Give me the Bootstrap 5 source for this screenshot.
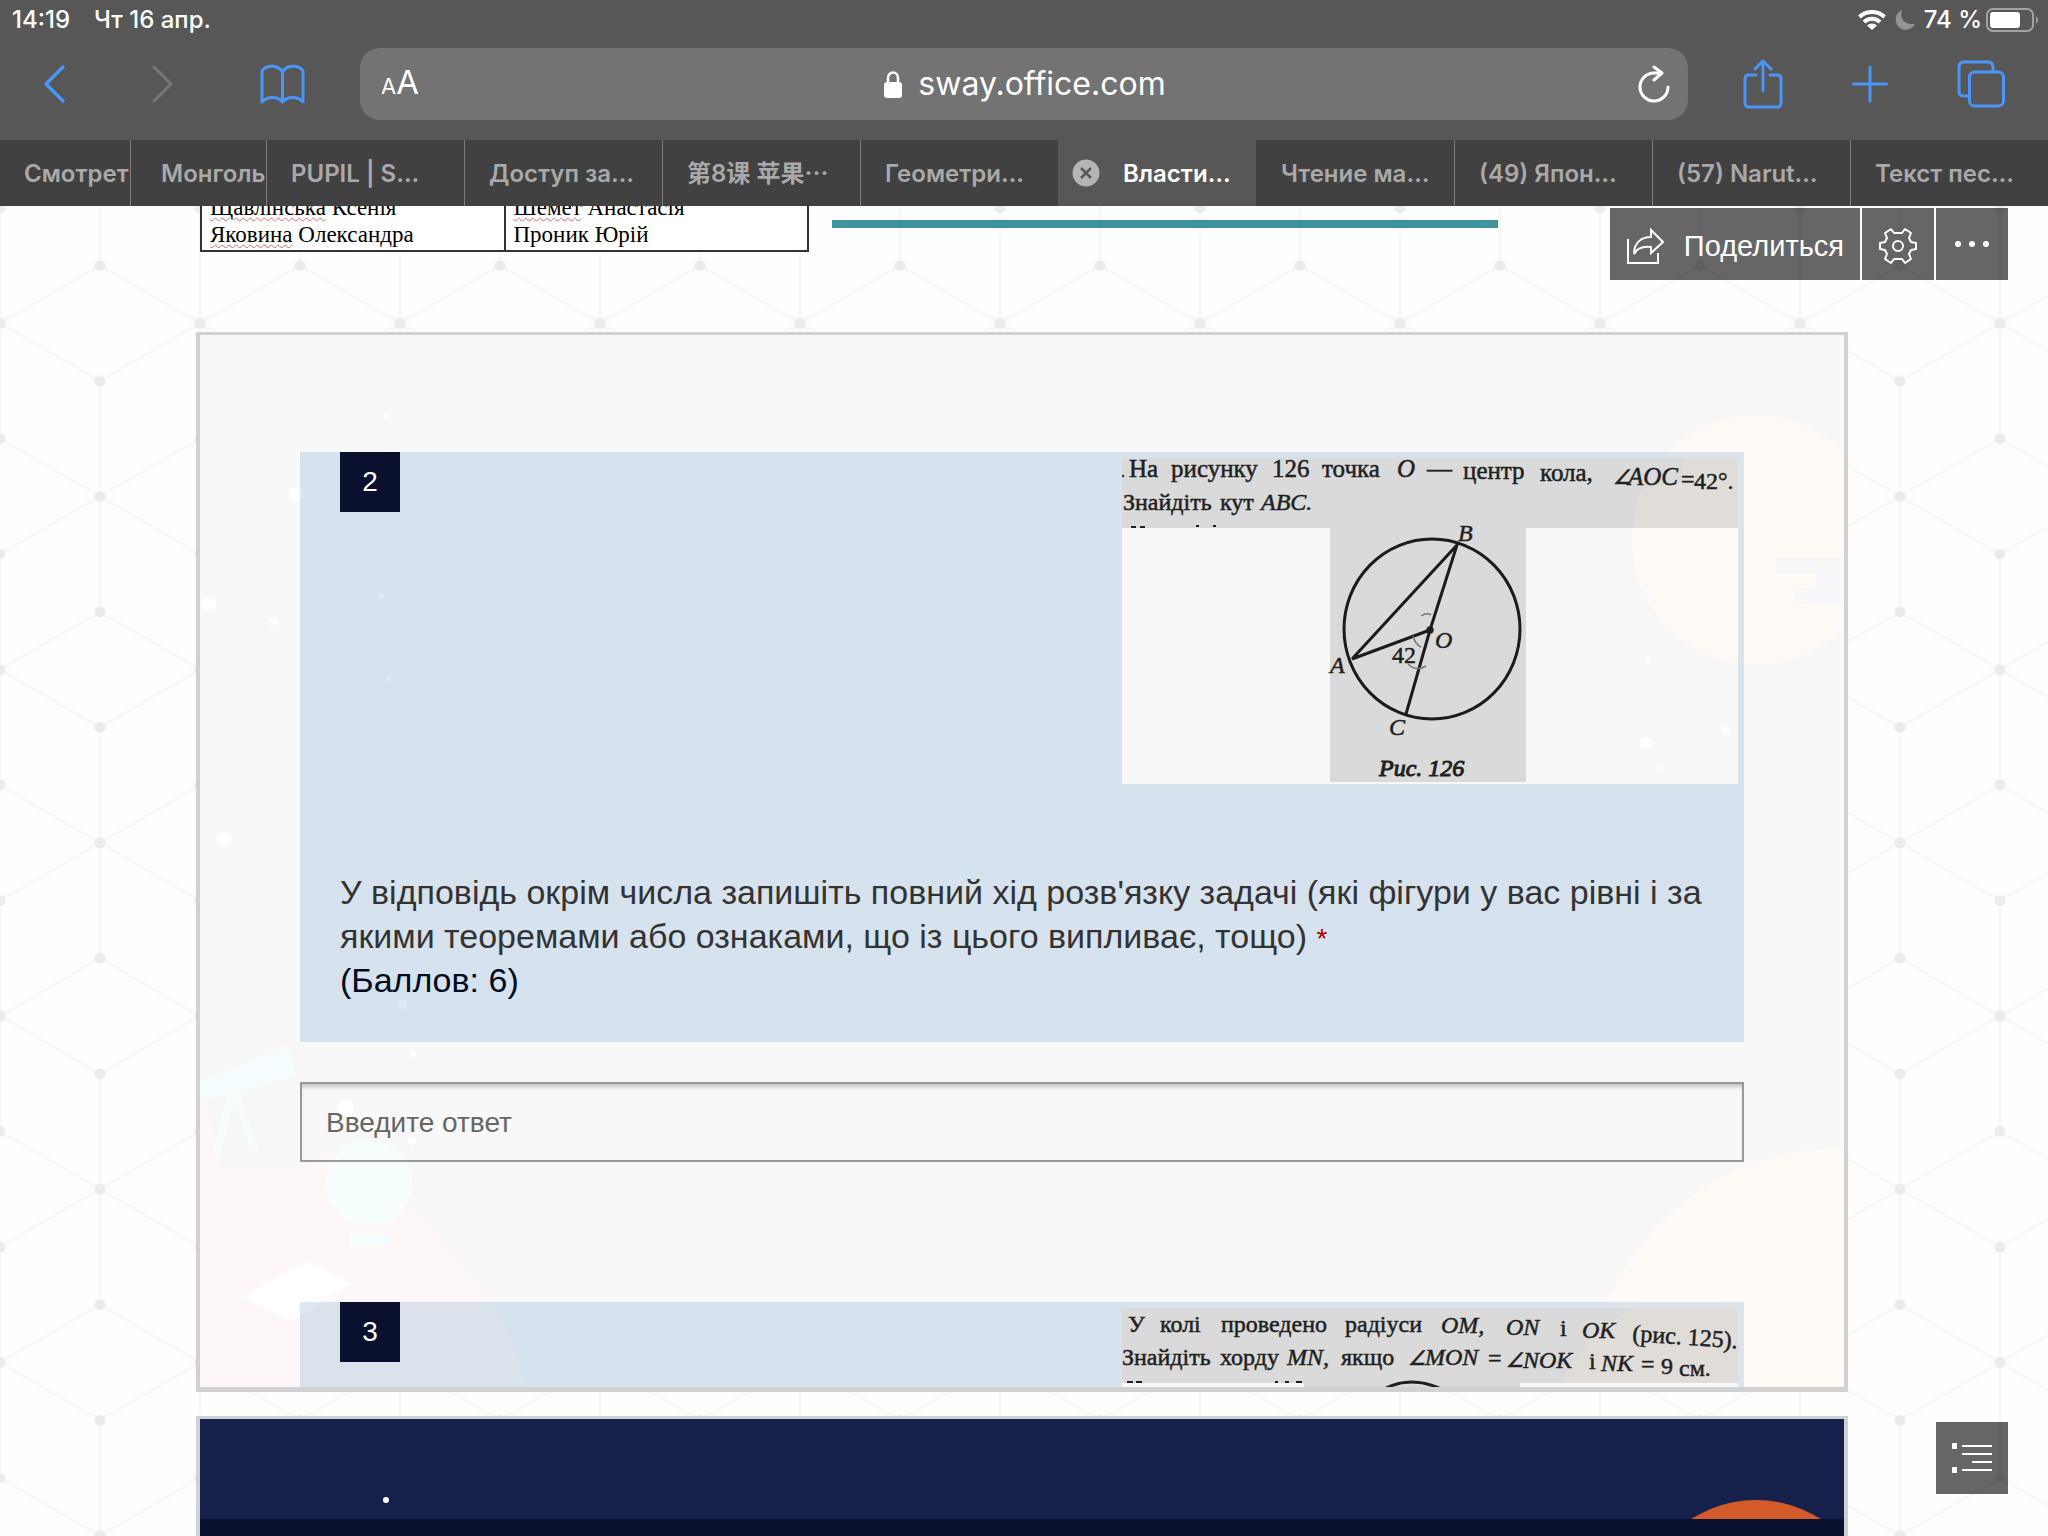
<!DOCTYPE html>
<html lang="ru">
<head>
<meta charset="utf-8">
<meta name="viewport" content="width=device-width, initial-scale=1">
<title>sway.office.com</title>
<link href="https://cdn.jsdelivr.net/npm/bootstrap@5.3.0/dist/css/bootstrap.min.css" rel="stylesheet">
<style>
body{background:#fefefe;font-family:"Liberation Sans",Arial,sans-serif;color:#333}
svg{display:block;flex:none}
.chrome{background:#575757;color:#fff;font-family:Inter,"Noto Sans CJK SC",sans-serif;z-index:3}
.statusbar{height:40px;padding:0 8px 0 12px;font-size:24px;font-weight:500;line-height:40px}
.toolbar-row{height:100px;padding:8px 43px 20px 44px}
.nav-left{gap:87px}
.nav-right{gap:69px}
.icon-btn{background:none;border:0;padding:0;color:#4b95f9}
.icon-btn:disabled{color:#777}
.address{height:72px;border-radius:20px;background:#737373;margin:0 55px;padding:0 18px 0 20px;font-size:32px}
.address > button{width:40px}
.aa-btn{background:none;border:0;padding:0;color:#fff;font-size:33px;line-height:40px;white-space:nowrap}
.aa-btn .aa-little{font-size:22px}
.tab-strip{height:66px;background:#414141;font-size:24px;font-weight:600;line-height:67px}
.tab-item{flex:1 1 198px;min-width:0;padding-left:24px;overflow:hidden;white-space:nowrap;color:#a9a9a9;text-decoration:none;border-left:1px solid #7c7c7c}
.tab-item:first-child{flex:0 0 130px;border-left:0}
.tab-item:nth-child(2){flex:0 0 136px;padding-left:30px}
.tab-current,.tab-current + .tab-item{border-left-color:transparent}
.tab-current{background:#575757;color:#fff;padding-left:13px;gap:23px}
.viewer{overflow:hidden}
.page-column{margin:0 200px 0 196px}
.top-row{height:46px;overflow:hidden;padding-left:4px;gap:23px}
.names{width:609px;border:2px solid #333;border-top:0;background:#fff;font-family:"Liberation Serif",serif;font-size:23px;line-height:27px;color:#000}
.names td{width:50%;padding:0 8px;white-space:nowrap}
.names td + td{border-left:2px solid #333}
.names tr:last-child td{padding-bottom:2px}
.misspelt{text-decoration:underline wavy #d96a6a 1px;text-underline-offset:2px}
.teal-rule{height:8px;width:666px;background:#40939b;margin-top:14px}
.form-frame{margin-top:80px;border:4px solid #d1d1d1;border-top-width:3px;border-bottom-width:5px;background:#f8f8f8}
.form-body{padding:117px 100px 0 100px}
.question-panel{background:rgba(78,138,193,.2);padding:0 6px 0 40px}
.number-box{width:60px;height:60px;background:#09112e;color:#fff;font-size:28px}
.question-text{font-size:34px;line-height:44px;padding:86px 34px 40px 0}
.points{color:#000b1e}
.required-mark{color:#a80000;font-size:28px;line-height:1}
.answer{height:80px;border:2px solid #999;border-radius:0;background:transparent;font-size:28px;padding:2px 24px 0;box-shadow:inset 0 5px 4px -2px #c4c4c4;margin:40px 0 140px}
.answer::placeholder{color:#666;opacity:1}
.next-frame{margin-top:24px;border:4px solid #cfd1d4;border-top-width:3px;border-bottom:0;background:#09112e}
.night{height:100px;background:#15214b}
.sway-tools{top:2px;right:40px;gap:2px;z-index:2}
.sway-btn{height:72px;min-width:72px;border:0;border-radius:0;background:rgba(0,0,0,.6);color:#fff;font-size:29px;line-height:36px;padding:4px 16px 0}
.list-btn{right:40px;bottom:42px;z-index:2}
.figure-art{margin-top:6px;font-family:"Liberation Serif",serif;font-size:24px;fill:#1f1f1f;stroke:#1f1f1f;stroke-width:.5}
.figure-art .angle-sign{font-size:20px}
</style>
<script src="https://cdn.jsdelivr.net/npm/bootstrap@5.3.0/dist/js/bootstrap.bundle.min.js"></script>
</head>
<body>
<div class="d-flex flex-column vh-100 overflow-hidden">
<header class="chrome position-relative">
  <div class="statusbar d-flex align-items-center">
    <span>14:19</span><span class="ms-4">Чт 16 апр.</span>
    <span class="ms-auto d-flex align-items-center">
      <svg width="28" height="20" viewBox="0 0 28 20" fill="none" stroke="#fff" stroke-width="4"><path d="M1.500 7a18 18 0 0 1 25 0M6 12a11.500 11.500 0 0 1 16 0"/><path d="M9 15.500a7 7 0 0 1 10 0L14 20z" fill="#fff" stroke="none"/></svg>
      <svg class="ms-2 me-2" width="22" height="20" viewBox="0 0 22 20"><path d="M8 0C5 9 11 15 21 14C17 21 7 22 3 15C0 9 2 3 8 0z" fill="#949494"/></svg>
      <span>74 %</span>
      <svg class="ms-1" width="54" height="24" viewBox="0 0 54 24"><rect x="1" y="1" width="46" height="22" rx="6" fill="none" stroke="#a2a2a2" stroke-width="2"/><rect x="4" y="4" width="30" height="16" rx="3" fill="#fff"/><path d="M50 8q4 4 0 8z" fill="#a2a2a2"/></svg>
    </span>
  </div>
  <nav class="toolbar-row d-flex align-items-center">
    <div class="nav-left d-flex align-items-center">
      <button class="icon-btn" aria-label="Назад"><svg width="21" height="38" viewBox="0 0 21 38" fill="none" stroke="currentColor" stroke-width="3.500" stroke-linecap="round" stroke-linejoin="round"><path d="M19 2L2 19L19 36"/></svg></button>
      <button class="icon-btn" aria-label="Вперёд" disabled><svg width="21" height="38" viewBox="0 0 21 38" fill="none" stroke="currentColor" stroke-width="3" stroke-linecap="round" stroke-linejoin="round"><path d="M2 2L19 19L2 36"/></svg></button>
      <button class="icon-btn" aria-label="Закладки"><svg width="45" height="40" viewBox="0 0 44 40" fill="none" stroke="currentColor" stroke-width="3" stroke-linejoin="round"><path d="M22 8C18 1 6 0 1.500 7V38C7 32 17 32 22 38C27 32 37 32 42.500 38V7C38 0 26 1 22 8V38"/></svg></button>
    </div>
    <div class="address flex-grow-1 d-flex align-items-center justify-content-between">
      <button class="aa-btn" aria-label="Вид страницы"><span class="aa-little">A</span>A</button>
      <span class="d-flex align-items-center gap-3">
        <svg width="18" height="27" viewBox="0 0 18 27"><path d="M4 12V7a5 5.500 0 0 1 10 0v5" fill="none" stroke="#fff" stroke-width="2.600"/><rect y="11" width="18" height="16" rx="3" fill="#fff"/></svg>
        <span>sway.office.com</span>
      </span>
      <button class="icon-btn text-white d-flex justify-content-end" aria-label="Обновить"><svg width="32" height="38" viewBox="0 0 32 38" fill="none" stroke="currentColor" stroke-width="3" stroke-linecap="round" stroke-linejoin="round"><path d="M30 22A14 14 0 1 1 16 8H23M16 2L24 8L16 15"/></svg></button>
    </div>
    <div class="nav-right d-flex align-items-center">
      <button class="icon-btn" aria-label="Поделиться"><svg width="40" height="50" viewBox="0 0 40 50" fill="none" stroke="currentColor" stroke-width="3" stroke-linecap="round" stroke-linejoin="round"><path d="M13 16H6Q2 16 2 20V44Q2 48 6 48H34Q38 48 38 44V20Q38 16 34 16H27M20 32V2M12 10L20 2L28 10"/></svg></button>
      <button class="icon-btn" aria-label="Новая вкладка"><svg width="36" height="38" viewBox="0 0 36 38" fill="none" stroke="currentColor" stroke-width="3" stroke-linecap="round"><path d="M18 2V36M1.500 19H34.500"/></svg></button>
      <button class="icon-btn" aria-label="Вкладки"><svg width="48" height="48" viewBox="0 0 48 48" fill="none" stroke="currentColor" stroke-width="3"><rect x="12.500" y="12" width="34" height="34" rx="5"/><path d="M12 36H7Q2 36 2 31V7Q2 2 7 2H31Q36 2 36 7V12"/></svg></button>
    </div>
  </nav>
  <nav class="tab-strip d-flex">
    <a class="tab-item" href="#">Смотрет</a>
    <a class="tab-item" href="#">Монголь</a>
    <a class="tab-item" href="#">PUPIL | S…</a>
    <a class="tab-item" href="#">Доступ за…</a>
    <a class="tab-item" href="#">第8课 苹果⋯</a>
    <a class="tab-item" href="#">Геометри…</a>
    <a class="tab-item tab-current d-flex align-items-center" href="#"><svg width="28" height="28" viewBox="0 0 28 28"><circle cx="14" cy="14" r="13.500" fill="#b5b5b5"/><path d="M9 9L19 19M19 9L9 19" stroke="#575757" stroke-width="2.500"/></svg><span>Власти…</span></a>
    <a class="tab-item" href="#">Чтение ма…</a>
    <a class="tab-item" href="#">(49) Япон…</a>
    <a class="tab-item" href="#">(57) Narut…</a>
    <a class="tab-item" href="#">Текст пес…</a>
  </nav>
</header>

<main class="viewer position-relative flex-grow-1 d-flex flex-column">
  <svg class="position-absolute top-0 start-0" width="100%" height="100%" aria-hidden="true">
    <defs><pattern id="cubes" width="200" height="346.400" patternUnits="userSpaceOnUse" patternTransform="translate(0 -56)">
      <g fill="none" stroke="#f8f8f8" stroke-width="3"><path d="M0 173.200L100 115.500L200 173.200L100 231L0 173.200M0 57.700L100 0L200 57.700M0 288.700L100 346.400L200 288.700M0 57.700V288.700M200 57.700V288.700M100 0V115.500M100 231V346.400"/></g>
      <g fill="#ebebeb"><circle cx="100" cy="0" r="5.500"/><circle cx="100" cy="346.400" r="5.500"/><circle cx="100" cy="115.500" r="5.500"/><circle cx="100" cy="231" r="5.500"/><circle cx="0" cy="57.700" r="5.500"/><circle cx="0" cy="173.200" r="5.500"/><circle cx="0" cy="288.700" r="5.500"/><circle cx="200" cy="57.700" r="5.500"/><circle cx="200" cy="173.200" r="5.500"/><circle cx="200" cy="288.700" r="5.500"/></g>
    </pattern></defs>
    <rect width="100%" height="100%" fill="url(#cubes)"/>
  </svg>

  <div class="sway-tools position-absolute d-flex">
    <button class="sway-btn d-flex align-items-center">
      <svg width="38" height="38" viewBox="0 0 38 38" fill="none" stroke="#fff" stroke-width="2"><path d="M2 12V36H32V26"/><path d="M25 3L37 15L25 26V20C16 19 11 21 8 27C8 16 15 10 25 10z"/></svg>
      <span class="ms-3 ps-1">Поделиться</span></button>
    <button class="sway-btn" aria-label="Настройки"><svg class="mx-auto" width="38" height="38" viewBox="0 0 38 38" fill="none" stroke="#fff" stroke-width="2" stroke-linejoin="round"><path d="M15 6L12 2L6 6L8 11L6 15L1 16V22L6 23L8 27L6 32L12 36L15 32H23L26 36L32 32L30 27L32 23L37 22V16L32 15L30 11L32 6L26 2L23 6z"/><circle cx="19" cy="19" r="5"/></svg></button>
    <button class="sway-btn" aria-label="Ещё"><svg class="mx-auto" width="36" height="12" viewBox="0 0 36 12" fill="#fff"><circle cx="4" cy="4" r="3"/><circle cx="18" cy="4" r="3"/><circle cx="32" cy="4" r="3"/></svg></button>
  </div>

  <div class="page-column position-relative flex-grow-1 d-flex flex-column">
    <div class="top-row d-flex">
      <div class="d-flex align-items-end flex-shrink-0">
        <table class="names">
          <tr><td><span class="misspelt">Щавлінська</span> Ксенія</td><td><span class="misspelt">Шемет</span> Анастасія</td></tr>
          <tr><td><span class="misspelt">Яковина</span> Олександра</td><td>Проник Юрій</td></tr>
        </table>
      </div>
      <div class="teal-rule"></div>
    </div>

    <form class="form-frame position-relative">
      <svg class="position-absolute top-0 start-0" width="100%" height="100%" viewBox="0 0 1644 1052" preserveAspectRatio="xMidYMid slice" aria-hidden="true">
        <circle cx="1556" cy="205" r="124" fill="#fffaf6"/>
        <circle cx="1640" cy="1065" r="252" fill="#fffaf6"/>
        <path d="M1576 222H1644V269H1594V253H1616V238H1576z" fill="#f8f8fa"/>
        <path d="M0 765L8 772L20 835H105L125 815L215 875L260 930L290 965L310 1000L328 1052H0z" fill="#fdf8f7"/>
        <path d="M0 747L87 711L97 740L38 757L58 814L52 817L34 765L20 820L13 818L27 760L0 763z" fill="#f6fdfe"/>
        <circle cx="169" cy="848" r="43" fill="#f6fffe"/><rect x="150" y="899" width="40" height="12" fill="#f6fdfe"/>
        <path d="M43 962L108 926L152 949L91 986z" fill="#fff"/>
        <g fill="#fff"><circle cx="9" cy="269" r="7"/><circle cx="73" cy="287" r="4"/><circle cx="96" cy="159" r="7"/><circle cx="186" cy="81" r="3"/><circle cx="181" cy="261" r="3"/><circle cx="189" cy="343" r="3"/><circle cx="24" cy="504" r="7"/><circle cx="146" cy="773" r="8"/><circle cx="214" cy="719" r="3"/><circle cx="212" cy="806" r="4"/><circle cx="202" cy="669" r="5"/></g>
      </svg>
      <div class="form-body position-relative">
        <section class="question-panel">
          <div class="d-flex justify-content-between align-items-start">
            <div class="number-box d-flex align-items-center justify-content-center">2</div>
            <svg class="figure-art" width="616" height="326" viewBox="0 0 616 326">
              <rect width="616" height="326" fill="#f8f8f8" stroke="none"/>
              <circle cx="634" cy="82" r="124" fill="#fffaf6" stroke="none"/>
              <path d="M0 0H616V70H404V324H208V70H0z" fill="#dadada" stroke="none"/>
              <path d="M560 0H616V70H511Q512 45 522 30L560 24z" fill="#e0dcd8" stroke="none"/>
              <g fill="#fff" stroke="none"><circle cx="526" cy="202" r="3"/><circle cx="524" cy="285" r="6"/><circle cx="604" cy="272" r="4"/><circle cx="539" cy="311" r="3"/></g>
              <circle cx="1" cy="18" r="1"/>
              <text font-size="25"><tspan x="7" y="19">На</tspan><tspan x="49">рисунку</tspan><tspan x="150">126</tspan><tspan x="200">точка</tspan><tspan x="275" font-style="italic">О</tspan><tspan x="305">—</tspan><tspan x="341" y="21">центр</tspan><tspan x="418" y="23">кола,</tspan><tspan class="angle-sign" x="491" y="26" font-style="italic">∠</tspan><tspan x="506" y="27" font-style="italic">AOC</tspan></text>
              <text><tspan x="559" y="29">=</tspan><tspan x="572" y="31">42°.</tspan></text>
              <text><tspan x="1" y="52">Знайдіть</tspan><tspan x="98">кут</tspan><tspan x="139" font-style="italic">ABC.</tspan></text>
              <path d="M9 69h5M18 69h5M74 68h3M91 68h3" stroke-width="2"/>
              <g fill="none" stroke="#1c1a1a" stroke-width="3"><ellipse cx="310" cy="171" rx="88" ry="90"/><path d="M230 201L335 87L308 172L284 256M230 201L308 172" stroke-linejoin="round"/></g>
              <circle cx="308" cy="172" r="3.500"/>
              <path d="M299 158q6-4 10-1M291 178q2 8 8 11M286 206q8 8 18 2" fill="none" stroke="#777" stroke-width="1.500"/>
              <g font-style="italic"><text x="336" y="83">B</text><text x="313" y="190">O</text><text x="208" y="215">A</text><text x="267" y="277">C</text><text x="257" y="318" stroke-width="1">Рис. 126</text></g>
              <text x="270" y="205">42</text>
            </svg>
          </div>
          <label class="question-text d-block" for="answer2">У відповідь окрім числа запишіть повний хід розв'язку задачі (які фігури у вас рівні і за якими теоремами або ознаками, що із цього випливає, тощо) <span class="required-mark">*</span><br><span class="points">(Баллов: 6)</span></label>
        </section>
        <input class="answer form-control" id="answer2" type="text" placeholder="Введите ответ">
        <section class="question-panel d-flex justify-content-between align-items-start">
          <div class="number-box d-flex align-items-center justify-content-center">3</div>
          <svg class="figure-art" width="616" height="79" viewBox="0 0 616 79">
            <path d="M0 0H616V79H0z" fill="#dadada" stroke="none"/>
            <path d="M510 0H616V79H436Q460 30 510 0z" fill="#e0dcd8" stroke="none"/>
            <path d="M0 75H182V79H0zM398 75H616V79H398z" fill="#f9f9f9" stroke="none"/>
            <text><tspan x="6" y="24">У</tspan><tspan x="38">колі</tspan><tspan x="99">проведено</tspan><tspan x="223">радіуси</tspan><tspan x="319" y="25" font-style="italic">OM,</tspan><tspan x="384" y="27" font-style="italic">ON</tspan><tspan x="438" y="28">і</tspan><tspan x="460" y="30" font-style="italic">OK</tspan></text>
            <text x="510" y="33" transform="rotate(4 510 33)">(рис. 125).</text>
            <text><tspan x="0" y="57">Знайдіть</tspan><tspan x="98">хорду</tspan><tspan x="165" font-style="italic">MN,</tspan><tspan x="219">якщо</tspan><tspan class="angle-sign" x="286" y="57" font-style="italic">∠</tspan><tspan x="303" font-style="italic">MON</tspan><tspan x="366" y="58">=</tspan><tspan class="angle-sign" x="384" y="59" font-style="italic">∠</tspan><tspan x="401" y="60" font-style="italic">NOK</tspan><tspan x="467" y="61">і</tspan><tspan x="479" y="63" font-style="italic">NK</tspan><tspan x="519" y="64">=</tspan><tspan x="539" y="66">9</tspan><tspan x="557" y="68">см.</tspan></text>
            <path d="M5 74h6M14 74h6M153 74h3M163 74h4M174 74h6" stroke-width="2"/>
            <path d="M264 80Q289 68 317 80" fill="none" stroke-width="3"/>
          </svg>
        </section>
      </div>
    </form>

    <section class="next-frame flex-grow-1">
      <div class="night"><svg width="100%" height="100" viewBox="0 0 1644 100" preserveAspectRatio="xMidYMid slice" aria-hidden="true"><circle cx="1556" cy="201" r="120" fill="#d35b2b"/><circle cx="186" cy="81" r="3" fill="#fff"/></svg></div>
    </section>
  </div>

  <button class="sway-btn list-btn position-absolute" aria-label="Содержание"><svg width="40" height="38" viewBox="0 0 40 38" fill="none" stroke="#fff" stroke-width="2"><path d="M10 5H40M10 13H40M20 21H40M10 29H40"/><path d="M0 5H5M0 29H5" stroke-width="6"/></svg></button>
</main>
</div>
</body>
</html>
